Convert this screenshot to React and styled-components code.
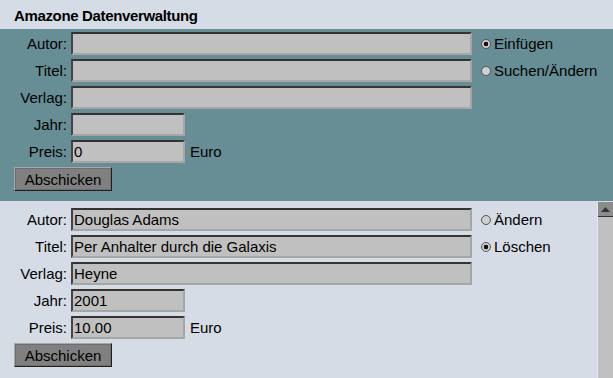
import React from "react";
import styled, { createGlobalStyle } from "styled-components";

const Global = createGlobalStyle`
  html, body { margin: 0; padding: 0; }
  body {
    width: 613px; height: 378px; overflow: hidden;
    font-family: "Liberation Sans", Arial, sans-serif;
    font-size: 15px; color: #000; background: #d5dce6;
  }
`;

const Page = styled.div`
  display: flex;
  flex-direction: column;
  width: 613px;
  height: 378px;
`;

const Header = styled.div`
  height: 29px;
  box-sizing: border-box;
  padding: 7px 0 0 14px;
  background: #d5dce6;
  font-weight: bold;
  font-size: 15px;
  letter-spacing: -0.35px;
  line-height: 18px;
`;

const Panel = styled.div`
  background: ${(p) => p.$bg};
  display: flex;
  flex-direction: column;
  box-sizing: border-box;
  padding-top: ${(p) => p.$top}px;
  height: ${(p) => p.$h}px;
`;

const Frame = styled.div`
  flex: 1;
  display: flex;
  background: #d5dce6;
  min-height: 0;
`;

const FrameContent = styled.div`
  flex: 1;
  display: flex;
  flex-direction: column;
  padding-top: 7px;
`;

const Body = styled.div`
  display: flex;
  align-items: flex-start;
`;

const Fields = styled.div`
  display: grid;
  grid-template-columns: 67px auto;
  column-gap: 4px;
  row-gap: 4px;
`;

const Label = styled.label`
  text-align: right;
  height: 23px;
  line-height: 23px;
  white-space: nowrap;
`;

const Cell = styled.div`
  display: flex;
  align-items: center;
  gap: 5px;
  height: 23px;
`;

const Input = styled.input`
  box-sizing: border-box;
  width: ${(p) => (p.$short ? 114 : 401)}px;
  height: 23px;
  margin: 0;
  padding: 0 0 0 1px;
  background: #c0c0c0;
  border-style: solid;
  border-width: 2px;
  border-color: #333 #a6a6a6 #a6a6a6 #444;
  font-family: "Liberation Sans", Arial, sans-serif;
  font-size: 15px;
  color: #000;
  outline: none;
`;

const Options = styled.div`
  display: flex;
  flex-direction: column;
  gap: 4px;
  margin-left: 9px;
`;

const Option = styled.label`
  display: flex;
  align-items: center;
  gap: 3px;
  height: 23px;
  white-space: nowrap;
`;

const Radio = styled.input.attrs({ type: "radio" })`
  appearance: none;
  box-sizing: border-box;
  width: 10px;
  height: 10px;
  margin: 1px 0 0 0;
  border-radius: 50%;
  border: 1px solid #555;
  background: ${(p) =>
    p.checked
      ? "radial-gradient(circle, #111 0 2px, #d0d0d0 2.6px)"
      : "#d0d0d0"};
`;

const Button = styled.button`
  align-self: flex-start;
  margin: 4px 0 0 14px;
  height: 24px;
  width: 98px;
  padding: 0;
  background: #808080;
  border: 1px solid;
  border-color: #a8a8a8 #202020 #202020 #a8a8a8;
  box-shadow: inset 0 0 0 1px #6e6e6e;
  font-family: "Liberation Sans", Arial, sans-serif;
  font-size: 15px;
  color: #000;
`;

const Scrollbar = styled.div`
  width: 15px;
  margin-top: 1px;
  background: #c0c0c0;
  border-left: 1px solid #e4e8ee;
  display: flex;
  flex-direction: column;
`;

const ScrollButton = styled.div`
  height: 14px;
  background: #8c8c8c;
  border-bottom: 1px solid #333;
  display: flex;
  align-items: center;
  justify-content: center;
`;

function Form({ values, options }) {
  const rows = [
    ["Autor", values[0], false],
    ["Titel", values[1], false],
    ["Verlag", values[2], false],
    ["Jahr", values[3], true],
    ["Preis", values[4], true, "Euro"],
  ];
  return (
    <>
      <Body>
        <Fields>
          {rows.map(([label, val, short, suffix]) => (
            <React.Fragment key={label}>
              <Label>{label}:</Label>
              <Cell>
                <Input $short={short} defaultValue={val} />
                {suffix && <span>{suffix}</span>}
              </Cell>
            </React.Fragment>
          ))}
        </Fields>
        <Options>
          {options.map(([text, checked]) => (
            <Option key={text}>
              <Radio checked={checked} readOnly />
              {text}
            </Option>
          ))}
        </Options>
      </Body>
      <Button>Abschicken</Button>
    </>
  );
}

export default function App() {
  return (
    <Page>
      <Global />
      <Header>Amazone Datenverwaltung</Header>
      <Panel $bg="#678e94" $top={3} $h={172}>
        <Form
          values={["", "", "", "", "0"]}
          options={[
            ["Einfügen", true],
            ["Suchen/Ändern", false],
          ]}
        />
      </Panel>
      <Frame>
        <FrameContent>
          <Form
            values={["Douglas Adams", "Per Anhalter durch die Galaxis", "Heyne", "2001", "10.00"]}
            options={[
              ["Ändern", false],
              ["Löschen", true],
            ]}
          />
        </FrameContent>
        <Scrollbar>
          <ScrollButton>
            <svg width="9" height="5" viewBox="0 0 9 5">
              <path d="M4.5 0 L9 5 L0 5 Z" fill="#333" />
            </svg>
          </ScrollButton>
        </Scrollbar>
      </Frame>
    </Page>
  );
}
